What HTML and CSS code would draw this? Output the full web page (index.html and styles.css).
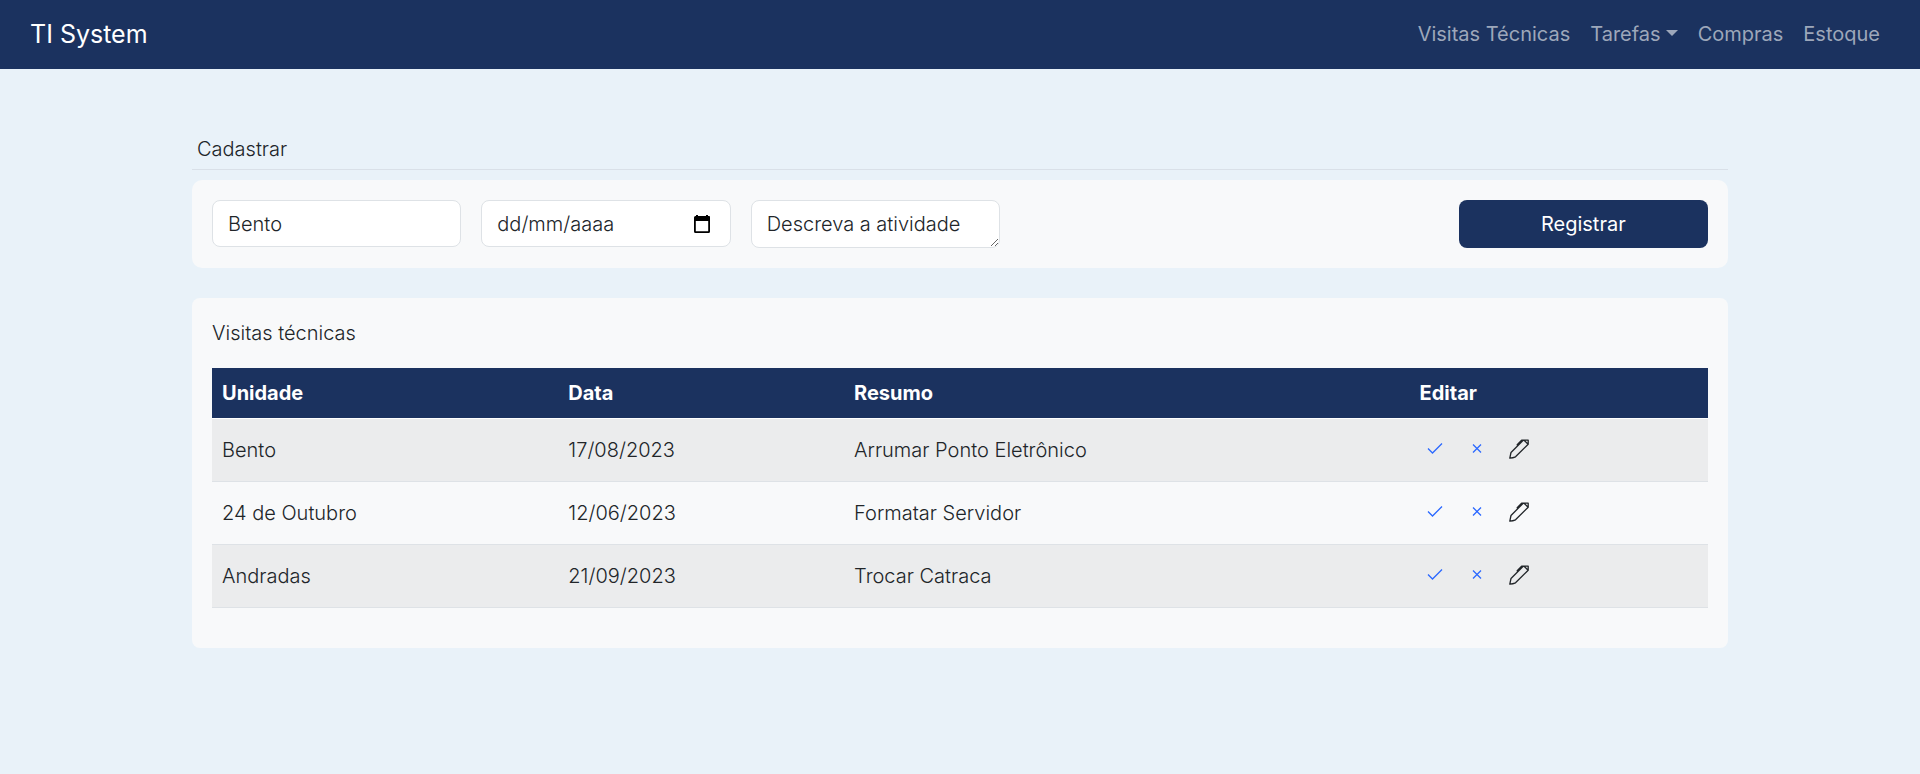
FILE: index.html
```html
<!DOCTYPE html>
<html lang="pt-BR">
<head>
  <meta charset="utf-8">
  <meta name="viewport" content="width=device-width, initial-scale=1">
  <title>TI System</title>
  <link rel="stylesheet" href="styles.css">
</head>
<body>
  <svg class="sprite" aria-hidden="true">
    <symbol id="icon-check" viewBox="0 0 20 20"><path d="M3 9.500l4.500 4.500L17 4.500" fill="none" stroke="currentColor" stroke-width="1.300"/></symbol>
    <symbol id="icon-x" viewBox="0 0 20 20"><path d="M6 5.500l8 8M14 5.500l-8 8" fill="none" stroke="currentColor" stroke-width="1.300"/></symbol>
    <symbol id="icon-pen" viewBox="0 0 20 20"><path d="M.8 19.200L2 13.500 14.200 1.200H19.200V5.200L6.500 17.800Q4 18.800 .8 19.200zM8.200 5.800L12.600 1.200H15L18.600 4.800" fill="none" stroke="currentColor" stroke-width="1.300" stroke-linejoin="round" stroke-linecap="round"/></symbol>
  </svg>

  <nav class="navbar">
    <a class="brand" href="#">TI System</a>
    <ul class="menu">
      <li><a class="menu-link" href="#">Visitas Técnicas</a></li>
      <li><a class="menu-link menu-dropdown" href="#">Tarefas</a></li>
      <li><a class="menu-link" href="#">Compras</a></li>
      <li><a class="menu-link" href="#">Estoque</a></li>
    </ul>
  </nav>

  <main class="content">
    <h1 class="section-title">Cadastrar</h1>
    <form class="card form-card">
      <input class="field" type="text" aria-label="Unidade" value="Bento">
      <div class="field date-field">
        <input class="date-input" type="text" aria-label="Data" placeholder="dd/mm/aaaa">
        <button class="date-button" type="button" aria-label="Abrir calendário">
          <svg class="calendar" viewBox="0 0 18 20" aria-hidden="true"><path d="M3 1h2v1h8V1h2v1h1.500Q17 2 17 3.500v14Q17 19 15.500 19h-13Q1 19 1 17.500v-14Q1 2 2.500 2H3zM2.800 7v10.200h12.400V7z" fill="currentColor" fill-rule="evenodd"/></svg>
        </button>
      </div>
      <textarea class="field text-field" rows="1" aria-label="Atividade" placeholder="Descreva a atividade"></textarea>
      <button class="submit" type="submit">Registrar</button>
    </form>

    <section class="card list-card">
      <h2 class="list-title">Visitas técnicas</h2>
      <table class="visits">
        <colgroup><col class="col-unit"><col class="col-date"><col class="col-summary"><col></colgroup>
        <thead>
          <tr><th>Unidade</th><th>Data</th><th>Resumo</th><th>Editar</th></tr>
        </thead>
        <tbody>
          <tr>
            <td>Bento</td><td>17/08/2023</td><td>Arrumar Ponto Eletrônico</td>
            <td><div class="actions">
              <button class="action" type="button" aria-label="Concluir"><svg class="icon"><use href="#icon-check"/></svg></button>
              <button class="action" type="button" aria-label="Excluir"><svg class="icon"><use href="#icon-x"/></svg></button>
              <button class="action action-edit" type="button" aria-label="Editar"><svg class="icon"><use href="#icon-pen"/></svg></button>
            </div></td>
          </tr>
          <tr>
            <td>24 de Outubro</td><td>12/06/2023</td><td>Formatar Servidor</td>
            <td><div class="actions">
              <button class="action" type="button" aria-label="Concluir"><svg class="icon"><use href="#icon-check"/></svg></button>
              <button class="action" type="button" aria-label="Excluir"><svg class="icon"><use href="#icon-x"/></svg></button>
              <button class="action action-edit" type="button" aria-label="Editar"><svg class="icon"><use href="#icon-pen"/></svg></button>
            </div></td>
          </tr>
          <tr>
            <td>Andradas</td><td>21/09/2023</td><td>Trocar Catraca</td>
            <td><div class="actions">
              <button class="action" type="button" aria-label="Concluir"><svg class="icon"><use href="#icon-check"/></svg></button>
              <button class="action" type="button" aria-label="Excluir"><svg class="icon"><use href="#icon-x"/></svg></button>
              <button class="action action-edit" type="button" aria-label="Editar"><svg class="icon"><use href="#icon-pen"/></svg></button>
            </div></td>
          </tr>
        </tbody>
      </table>
    </section>
  </main>
</body>
</html>
```

FILE: styles.css
```css
*,
*::before,
*::after {
  box-sizing: border-box;
}

body {
  margin: 0;
  background: #e9f2f9;
  color: #212529;
  font: 350 20px/30px Inter, sans-serif;
}

.sprite {
  display: none;
}

/* Navigation */
.navbar {
  display: flex;
  align-items: center;
  justify-content: space-between;
  padding: 10px 30px;
  background: #1b325f;
  font-weight: 400;
}

.brand {
  padding-bottom: 2px;
  color: #fff;
  font-size: 25px;
  line-height: 38px;
  text-decoration: none;
}

.menu {
  display: flex;
  margin: 0;
  padding: 0;
  list-style: none;
}

.menu-link {
  display: block;
  padding: 10px;
  line-height: 29px;
  color: #9da7ba;
  text-decoration: none;
}

.menu-dropdown::after {
  content: "";
  display: inline-block;
  margin-left: 5px;
  vertical-align: 5px;
  border: 6px solid transparent;
  border-top-color: currentColor;
  border-bottom: 0;
}

/* Page */
.content {
  width: 80%;
  margin: 65px auto 0;
}

.section-title {
  margin: 0 0 10px;
  padding: 0 5px 5px;
  border-bottom: 1px solid #d9e0e8;
  font-size: 20px;
  font-weight: inherit;
}

.card {
  padding: 20px;
  background: #f8f9fa;
}

/* Form */
.form-card {
  display: flex;
  align-items: flex-start;
  gap: 20px;
  margin-bottom: 30px;
  border-radius: 10px;
}

.field,
.submit {
  width: calc(100% / 6);
  min-width: 0;
  border-radius: 8px;
  font: inherit;
}

.field {
  height: 47px;
  padding: 8px 15px;
  border: 1px solid #dee2e6;
  background: #fff;
  color: #212529;
}

.date-field {
  display: flex;
  align-items: center;
}

.date-input {
  flex: 1;
  min-width: 0;
  padding: 0;
  border: 0;
  outline: 0;
  background: none;
  color: inherit;
  font: inherit;
}

.date-button {
  display: flex;
  padding: 0 4px;
  border: 0;
  background: none;
  color: #000;
}

.calendar {
  width: 18px;
  height: 20px;
}

.text-field {
  height: 48px;
  resize: vertical;
  overflow: hidden;
}

.date-input::placeholder,
.text-field::placeholder {
  color: #212529;
  opacity: 1;
}

.submit {
  height: 48px;
  margin-left: auto;
  border: 0;
  background: #1b325f;
  color: #fff;
  font-weight: 400;
}

/* Visits list */
.list-card {
  border-radius: 8px;
}

.list-title {
  margin: 0 0 20px;
  font-size: 20px;
  font-weight: inherit;
}

.visits {
  width: 100%;
  margin-bottom: 20px;
  table-layout: fixed;
  border-spacing: 0;
}

.col-unit {
  width: 23.15%;
}

.col-date {
  width: 19.1%;
}

.col-summary {
  width: 37.8%;
}

.visits th {
  padding: 10px;
  border-bottom: 1px solid #fff;
  background: #1b325f;
  color: #fff;
  font-weight: 700;
  text-align: left;
}

.visits td {
  height: 63px;
  padding: 10px;
  border-bottom: 1px solid #dee2e6;
}

.visits tbody tr:nth-child(odd) {
  background: #ebeced;
}

.actions {
  display: flex;
  gap: 12px;
  padding-bottom: 2px;
}

.action {
  display: flex;
  padding: 5px;
  border: 0;
  background: none;
  color: #2b68ff;
}

.action-edit {
  color: #212529;
}

.icon {
  width: 20px;
  height: 20px;
}
```
